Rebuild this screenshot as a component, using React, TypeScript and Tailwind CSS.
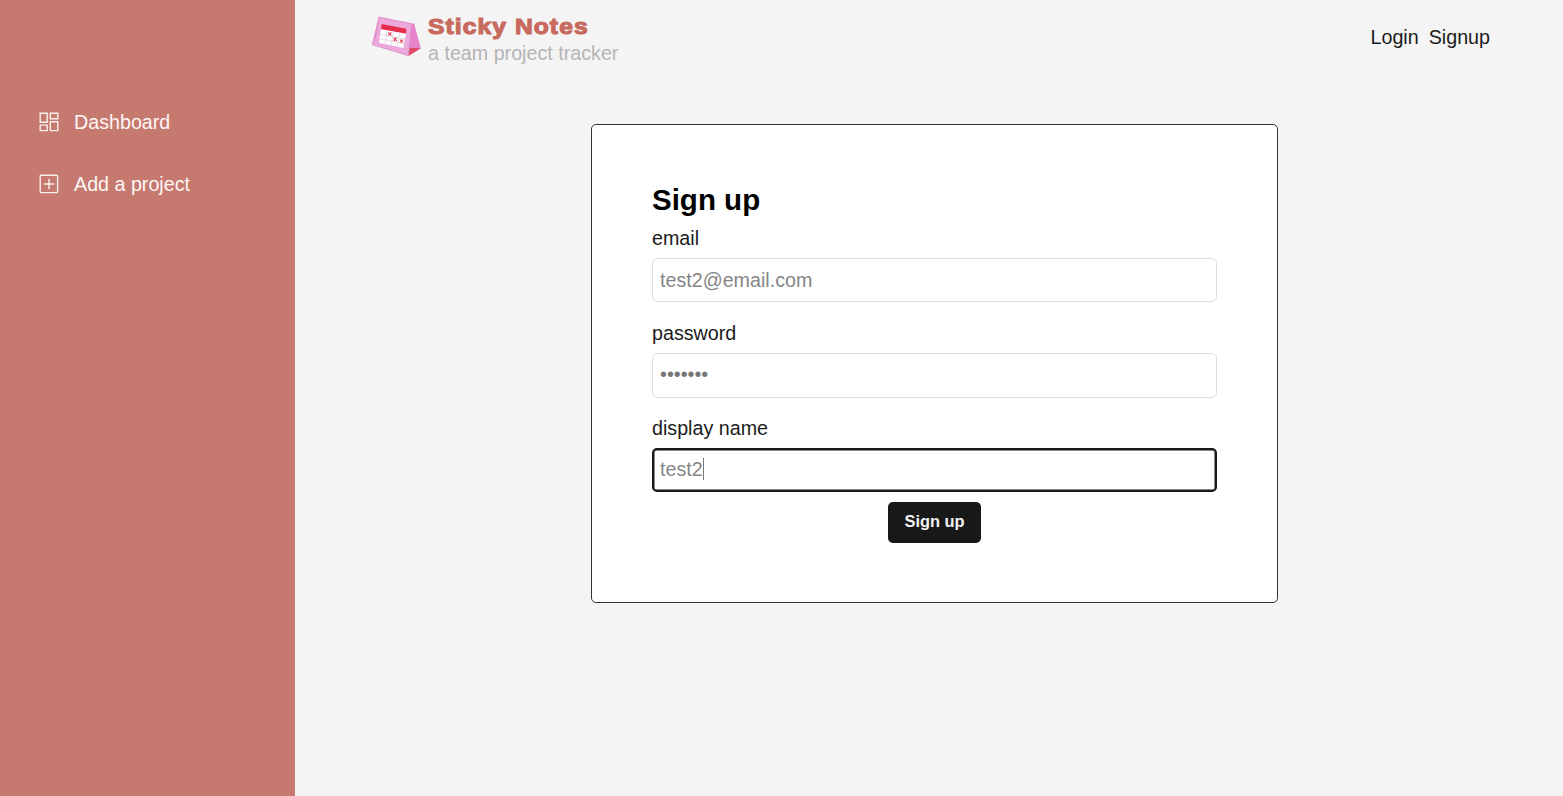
function Logo() {
  return (
    <svg viewBox="0 0 240 192" className="block h-16 w-20" aria-hidden="true">
      <path d="M56 38 L162 59 L182 133 L145 155 L36 121 Z" fill="#e98bcb" />
      <path d="M154 60 L162 59 L182 133 L146 155 Z" fill="#e783c8" />
      <path d="M149 131 L182 133 L146 155 Z" fill="#e04a64" />
      <path d="M56 39 L155 60 L145 155 L36 122 Q51 99 54 60 Z" fill="#eda8dc" stroke="#d58fc6" strokeWidth="2" />
      <path d="M65 60 L139 74 L138 89 L63 76 Z" fill="#e52d4d" />
      <path d="M63 76 L138 89 L130 132 L57 116 Z" fill="#fff" />
      <path d="M61 91 L136 105 M59 104 L133 119 M81 79 L75 120 M100 82 L94 124 M119 86 L112 128" stroke="#d9c8d6" strokeWidth="2" fill="none" />
      <path d="M85 85 l9 9 m0 -9 l-9 9 M101 101 l9 10 m0 -10 l-9 10 M120 107 l9 9 m0 -9 l-9 9" stroke="#e64560" strokeWidth="3.5" fill="none" />
    </svg>
  );
}

function DashboardIcon() {
  return (
    <svg viewBox="0 0 20 20" className="size-5 shrink-0" fill="none" stroke="#fbefed" strokeWidth="1.4" aria-hidden="true">
      <path d="M1.2 1.2h7v9h-7zM11.3 1.2h7.5v5.5h-7.5zM1.2 13.1h7v5.5h-7zM11.3 9.7h7.5v8.9h-7.5z" />
    </svg>
  );
}

function AddIcon() {
  return (
    <svg viewBox="0 0 20 20" className="size-5 shrink-0" fill="none" stroke="#fbefed" strokeWidth="1.4" aria-hidden="true">
      <rect x="1.2" y="1.2" width="17.4" height="17.4" rx="1" />
      <path d="M10 4.8v10.4M4.8 10h10.4" />
    </svg>
  );
}

export default function App() {
  return (
    <div className="flex h-[796px] w-full overflow-hidden bg-[#f4f4f4] font-['Liberation_Sans',Arial,sans-serif] text-[19.7px] leading-6 text-[#1b1b1b]">
      <aside className="w-[295px] shrink-0 bg-[#c6796f] pt-[110px] pl-[39px] text-[#fdf6f5]">
        <nav className="flex flex-col gap-[38px]">
          <a className="flex items-center gap-[15px]"><DashboardIcon /><span>Dashboard</span></a>
          <a className="flex items-center gap-[15px]"><AddIcon /><span>Add a project</span></a>
        </nav>
      </aside>
      <div className="flex min-w-0 flex-1 flex-col">
        <header className="flex h-[74px] justify-between pr-[73px] pl-[65px]">
          <div className="flex pt-1">
            <Logo />
            <div className="-ml-3 w-52 pt-[9px]">
              <h1 className="origin-left scale-x-[1.12] text-[22px] leading-7 font-bold tracking-[0.95px] whitespace-nowrap text-[#c8695d] [-webkit-text-stroke:1.1px_#c8695d]">Sticky Notes</h1>
              <p className="leading-6 whitespace-nowrap text-[#b5b5b5]">a team project tracker</p>
            </div>
          </div>
          <nav className="flex items-center gap-[10px]"><a>Login</a><a>Signup</a></nav>
        </header>
        <main className="mt-[50px] ml-[296px] h-[479px] w-[687px] rounded-[5px] border border-[#333] bg-white px-[60px] pt-[56px]">
          <form className="flex flex-col">
            <h2 className="h-[45px] text-[29.5px] leading-[38px] font-bold text-black">Sign up</h2>
            <label className="flex flex-col gap-[8px]">
              email
              <span className="flex h-[44px] items-center rounded-[5px] border border-[#dedede] px-[7px] pb-px text-[#858585]">test2@email.com</span>
            </label>
            <label className="mt-[18.5px] flex flex-col gap-[8px]">
              password
              <span className="flex h-[45px] items-center rounded-[5px] border border-[#dedede] px-[7px] pb-[3px] text-[#777]">•••••••</span>
            </label>
            <label className="mt-[18px] flex flex-col gap-[8px]">
              display name
              <span className="flex h-[44.5px] items-center rounded-[5px] border-2 border-[#181818] px-[6px] pb-px text-[#858585] shadow-[inset_0_0_0_0.5px_#181818]">
                test2<span className="h-[22px] w-px bg-[#777]" />
              </span>
            </label>
            <button type="button" className="mt-[10px] h-[41px] w-[93px] self-center rounded-[5px] bg-[#181818] pb-[3px] text-[16.4px] font-bold text-[#f3f3f3]">Sign up</button>
          </form>
        </main>
      </div>
    </div>
  );
}
